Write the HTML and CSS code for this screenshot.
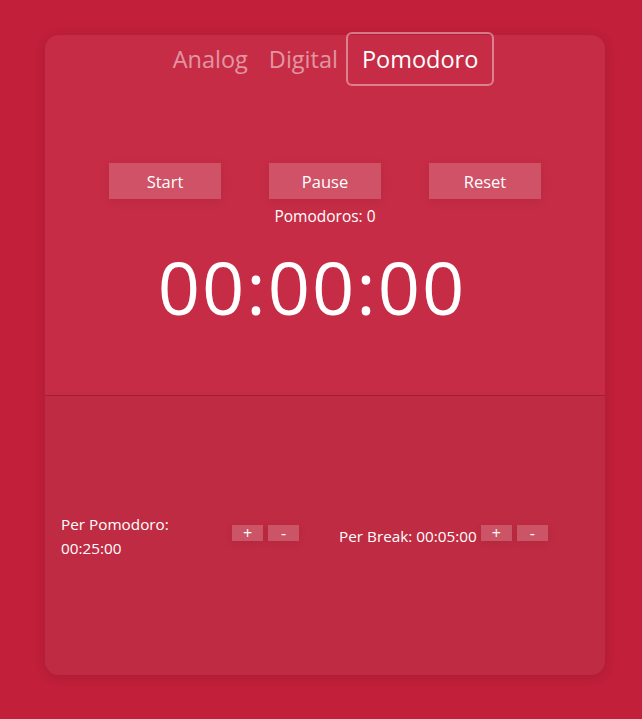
FILE: index.html
```html
<!DOCTYPE html>
<html>
<head>
<meta charset="utf-8">
<link rel="stylesheet" href="styles.css">
</head>
<body>
<div class="card">
  <div class="top">
    <nav class="tabs">
      <span class="tab">Analog</span>
      <span class="tab tab-digital">Digital</span>
      <span class="tab active">Pomodoro</span>
    </nav>
    <div class="controls">
      <button class="btn">Start</button>
      <button class="btn">Pause</button>
      <button class="btn">Reset</button>
    </div>
    <div class="count">Pomodoros: 0</div>
    <div class="clock">00:00:00</div>
  </div>
  <div class="bottom">
    <div class="setting setting-left">
      <div class="label label-left">Per Pomodoro: 00:25:00</div>
      <div class="adjust">
        <button class="small">+</button>
        <button class="small">-</button>
      </div>
    </div>
    <div class="setting setting-right">
      <div class="label">Per Break: 00:05:00</div>
      <div class="adjust">
        <button class="small">+</button>
        <button class="small">-</button>
      </div>
    </div>
  </div>
</div>
</body>
</html>
```
FILE: styles.css
```css
* { box-sizing: border-box; }
html, body {
  margin: 0;
  padding: 0;
  background: #c11f3a;
  font-family: "Open Sans", "Noto Sans", sans-serif;
  color: #fff;
}
body {
  padding: 35px 37px 0 45px;
  height: 719px;
  overflow: hidden;
}
.card {
  width: 560px;
  height: 640px;
  border-radius: 14px;
  display: flex;
  flex-direction: column;
  box-shadow: 0 2px 12px rgba(0,0,0,0.12);
}
.top {
  height: 361px;
  background: #c62c45;
  border-radius: 14px 14px 0 0;
  display: flex;
  flex-direction: column;
  align-items: center;
  border-bottom: 1px solid #a41e33;
}
.tabs {
  display: flex;
  align-items: center;
  margin-top: -3px;
  padding-left: 17px;
  height: 54px;
}
.tab {
  font-size: 23.5px;
  color: rgba(255,255,255,0.5);
  line-height: 50px;
}
.tab-digital { margin-left: 21px; margin-right: 8px; }
.tab.active {
  color: #fff;
  border: 2px solid rgba(255,255,255,0.4);
  border-radius: 6px;
  padding: 0 14px;
}
.controls {
  display: flex;
  gap: 48px;
  margin-top: 77px;
}
.btn {
  width: 112px;
  height: 36px;
  border: none;
  background: rgba(255,255,255,0.18);
  color: #fff;
  font-family: inherit;
  font-size: 16.5px;
  box-shadow: 0 2px 10px rgba(0,0,0,0.08);
  padding: 0;
}
.count {
  font-size: 15.5px;
  margin-top: 6px;
  line-height: 22px;
}
.clock {
  font-size: 74px;
  line-height: 100px;
  margin-top: 10px;
  margin-left: -26px;
  letter-spacing: 2px;
  font-weight: 400;
}
.bottom {
  flex: 1;
  background: #bf2b42;
  border-radius: 0 0 14px 14px;
  display: flex;
  align-items: center;
  padding: 0 0 0 16px;
}
.setting {
  display: flex;
  align-items: center;
}
.setting-left { width: 278px; }
.label {
  font-size: 15.3px;
  line-height: 24px;
}
.label-left { width: 171px; }
.adjust {
  display: flex;
  gap: 5px;
  margin-left: 4px;
  margin-bottom: 6px;
}
.setting-left .adjust { margin-left: 0; }
.small {
  width: 31px;
  height: 16px;
  border: none;
  padding: 0;
  background: rgba(255,255,255,0.2);
  color: #fff;
  font-family: inherit;
  font-size: 16px;
  line-height: 16px;
  box-shadow: 0 2px 8px rgba(0,0,0,0.08);
}
```
